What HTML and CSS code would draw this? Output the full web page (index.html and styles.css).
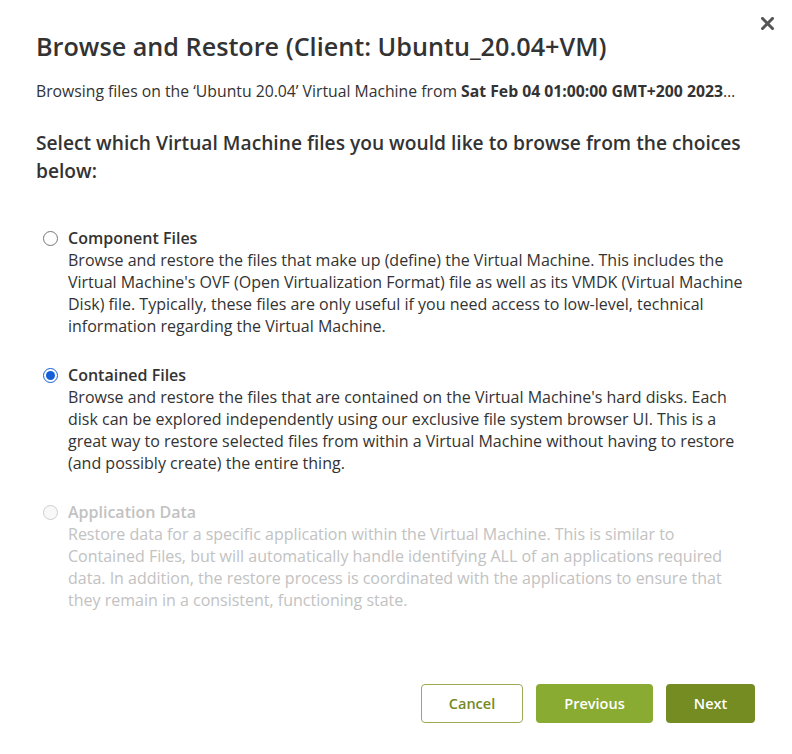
FILE: index.html
```html
<!DOCTYPE html>
<html lang="en">
<head>
    <meta charset="UTF-8">
    <meta name="viewport" content="width=device-width, initial-scale=1.0">
    <title>Browse and Restore</title>
    <link rel="stylesheet" href="styles.css">
</head>
<body>
    <div class="dialog">
        <button class="close" aria-label="Close">
            <svg width="13" height="13" viewBox="0 0 13 13">
                <path d="M1.5 1.5 L11.5 11.5 M11.5 1.5 L1.5 11.5" stroke="#555" stroke-width="3" stroke-linecap="square" fill="none"/>
            </svg>
        </button>

        <h1 class="title">Browse and Restore (Client: Ubuntu_20.04+VM)</h1>
        <div class="subtitle">Browsing files on the ‘Ubuntu 20.04’ Virtual Machine from <b>Sat Feb 04 01:00:00 GMT+200 2023 01:00:00 AM</b></div>

        <h2 class="question">Select which Virtual Machine files you would like to browse from the choices below:</h2>

        <div class="options">
            <label class="option">
                <input type="radio" name="mode" value="component">
                <div class="option-text">
                    <div class="option-name">Component Files</div>
                    <div class="option-desc">Browse and restore the files that make up (define) the Virtual Machine. This includes the Virtual Machine's OVF (Open Virtualization Format) file as well as its VMDK (Virtual Machine Disk) file. Typically, these files are only useful if you need access to low-level, technical information regarding the Virtual Machine.</div>
                </div>
            </label>

            <label class="option">
                <input type="radio" name="mode" value="contained" checked>
                <div class="option-text">
                    <div class="option-name">Contained Files</div>
                    <div class="option-desc">Browse and restore the files that are contained on the Virtual Machine's hard disks. Each disk can be explored independently using our exclusive file system browser UI. This is a great way to restore selected files from within a Virtual Machine without having to restore (and possibly create) the entire thing.</div>
                </div>
            </label>

            <label class="option disabled">
                <input type="radio" name="mode" value="application" disabled>
                <div class="option-text">
                    <div class="option-name">Application Data</div>
                    <div class="option-desc">Restore data for a specific application within the Virtual Machine. This is similar to Contained Files, but will automatically handle identifying ALL of an applications required data. In addition, the restore process is coordinated with the applications to ensure that they remain in a consistent, functioning state.</div>
                </div>
            </label>
        </div>

        <div class="actions">
            <button class="btn btn-outline">Cancel</button>
            <button class="btn btn-light">Previous</button>
            <button class="btn btn-dark">Next</button>
        </div>
    </div>
</body>
</html>
```

FILE: styles.css
```css
body {
    margin: 0;
    background-color: #fff;
    font-family: "Open Sans", sans-serif;
    color: #333;
}
.dialog {
    position: relative;
    width: 792px;
    height: 754px;
    box-sizing: border-box;
    padding: 30px 37px 0 36px;
}
.close {
    position: absolute;
    top: 17px;
    right: 18px;
    padding: 0;
    border: none;
    background: none;
    cursor: pointer;
    line-height: 0;
}
.title {
    margin: 0;
    font-size: 25.2px;
    line-height: 32px;
    font-weight: 600;
    color: #333;
}
.subtitle {
    margin-top: 19px;
    font-size: 15.75px;
    line-height: 20px;
    white-space: nowrap;
    overflow: hidden;
    text-overflow: ellipsis;
    width: 702px;
}
.subtitle b {
    font-weight: 700;
}
.question {
    margin: 28px 0 0;
    font-size: 19.2px;
    line-height: 28px;
    font-weight: 600;
}
.options {
    margin-top: 42px;
    display: flex;
    flex-direction: column;
    gap: 27px;
}
.option {
    display: flex;
    gap: 10px;
    cursor: pointer;
}
.option input[type="radio"] {
    width: 15px;
    height: 15px;
    margin: 4px 0 0 7px;
    flex-shrink: 0;
    accent-color: #1560d6;
}
.option-text {
    font-size: 16px;
    line-height: 22px;
}
.option-name {
    font-weight: 600;
}
.option.disabled {
    color: #c2c2c2;
    cursor: default;
}
.actions {
    margin-top: 73px;
    display: flex;
    justify-content: flex-end;
    gap: 13px;
}
.btn {
    height: 39px;
    border-radius: 4px;
    font-family: "Open Sans", sans-serif;
    font-size: 14.5px;
    font-weight: 600;
    cursor: pointer;
}
.btn-outline {
    width: 102px;
    background-color: #fff;
    color: #76891f;
    border: 1px solid #9aaa55;
}
.btn-light {
    width: 117px;
    background-color: #8aab32;
    color: #fff;
    border: none;
}
.btn-dark {
    width: 89px;
    background-color: #748c21;
    color: #fff;
    border: none;
}
```
